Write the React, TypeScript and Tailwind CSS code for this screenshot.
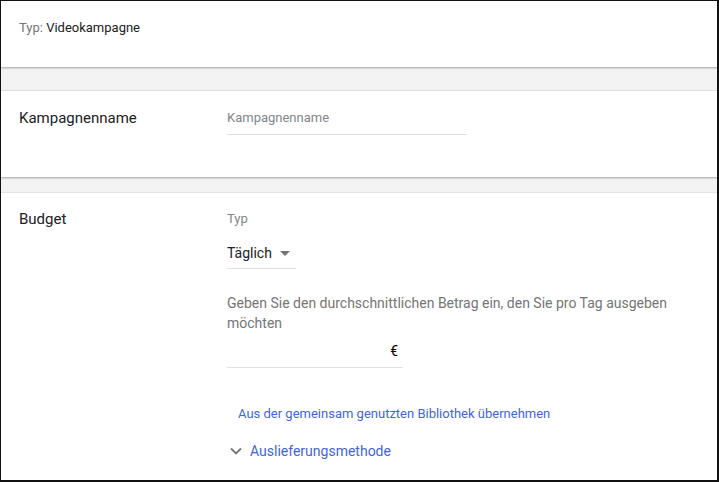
import React from "react";

export default function App() {
  return (
    <div
      className="w-[719px] h-[482px] overflow-hidden bg-[#f3f3f3] border-l border-t border-r-2 border-b-2 border-[#111] flex flex-col"
      style={{ fontFamily: "Roboto, 'Liberation Sans', sans-serif" }}
    >
      <section className="bg-white h-[66px] shrink-0 pl-[18px] pt-[17px] shadow-[0_1px_2px_rgba(0,0,0,0.35)] relative z-10">
        <div className="text-[13px] leading-[20px]">
          <span className="text-[#757575]">Typ: </span>
          <span className="text-[#212121]">Videokampagne</span>
        </div>
      </section>

      <div className="h-[24px] shrink-0" />

      <section className="bg-white h-[86px] shrink-0 pl-[18px] pt-[16px] flex shadow-[0_1px_2px_rgba(0,0,0,0.35),0_-1px_1px_rgba(0,0,0,0.06)] relative z-10">
        <div className="w-[208px] text-[15px] leading-[22px] text-[#202124]">Kampagnenname</div>
        <div className="w-[240px] border-b border-[#e0e0e0] pb-[6px] pt-[1px] self-start">
          <div className="text-[13px] leading-[20px] text-[#80868b]">Kampagnenname</div>
        </div>
      </section>

      <div className="h-[16px] shrink-0" />

      <section className="bg-white flex-1 pl-[18px] pt-[15px] flex shadow-[0_-1px_1px_rgba(0,0,0,0.06)]">
        <div className="w-[208px] text-[15px] leading-[22px] text-[#202124]">Budget</div>
        <div className="flex flex-col items-start pt-[1px]">
          <div className="text-[13px] leading-[20px] text-[#80868b]">Typ</div>
          <div className="mt-[14px] w-[69px] border-b border-[#e0e0e0] pb-[5px] flex items-center">
            <span className="text-[14px] leading-[20px] text-[#202124]">Täglich</span>
            <svg width="10" height="5" viewBox="0 0 10 5" className="ml-[8px]">
              <path d="M0 0 L10 0 L5 5 Z" fill="#757575" />
            </svg>
          </div>
          <p className="mt-[24px] w-[460px] text-[14px] leading-[20px] text-[#757575]">
            Geben Sie den durchschnittlichen Betrag ein, den Sie pro Tag ausgeben möchten
          </p>
          <div className="mt-[8px] w-[176px] border-b border-[#e0e0e0] pb-[6px] flex justify-end pr-[5px]">
            <span className="text-[14px] leading-[20px] text-[#000]">€</span>
          </div>
          <a className="mt-[36px] ml-[11px] text-[13px] leading-[20px] text-[#3f66d9] cursor-pointer">
            Aus der gemeinsam genutzten Bibliothek übernehmen
          </a>
          <div className="mt-[17px] ml-[3px] flex items-center text-[#3f66d9]">
            <svg width="12" height="8" viewBox="0 0 12 8" className="mr-[8px]">
              <path d="M1 1.5 L6 6.5 L11 1.5" fill="none" stroke="#757575" strokeWidth="1.8" />
            </svg>
            <span className="text-[14px] leading-[20px]">Auslieferungsmethode</span>
          </div>
        </div>
      </section>
    </div>
  );
}
